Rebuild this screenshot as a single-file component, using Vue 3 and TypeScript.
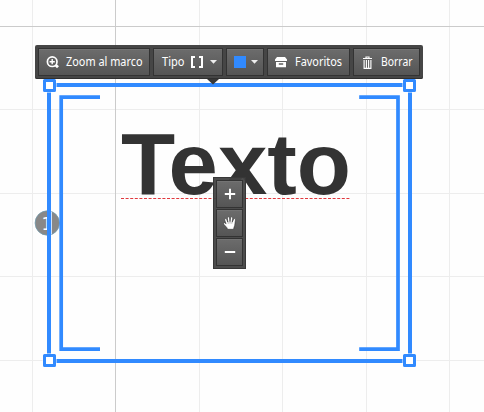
<script setup lang="ts">
interface Tool {
  id: string
  label?: string
  labelWidth?: number
}
const tools: Tool[] = [
  { id: 'zoom', label: 'Zoom al marco', labelWidth: 76.5 },
  { id: 'type', label: 'Tipo', labelWidth: 22.5 },
  { id: 'color' },
  { id: 'favorites', label: 'Favoritos', labelWidth: 47 },
  { id: 'delete', label: 'Borrar', labelWidth: 31.5 },
]
const columns = [32, 199, 282, 366, 449]
const rows = [109, 193, 276, 360]
const handles = [[43, 79], [403, 79], [43, 354], [403, 354]]
</script>

<template>
  <main class="canvas">
    <svg class="stage" width="484" height="412" viewBox="0 0 484 412">
      <g class="grid">
        <rect v-for="x in columns" :key="'c' + x" :x="x" y="0" width="1" height="412" />
        <rect v-for="y in rows" :key="'r' + y" x="0" :y="y" width="484" height="1" />
      </g>
      <g class="axis">
        <rect x="115" y="0" width="1" height="412" />
        <rect x="0" y="26" width="484" height="1" />
      </g>
      <text class="heading" x="121" y="194" textLength="230" lengthAdjust="spacingAndGlyphs">Texto</text>
      <path class="spelling" d="M121 198.5H351" />
      <circle class="badge" cx="47.3" cy="223" r="12.2" />
      <text class="badge-label" x="41.5" y="229.8">1</text>
      <path class="halo" d="M51.5 211.5V234.5" />
      <path class="frame" d="M49 85H410V361H49Z" />
      <path class="bracket" d="M100 97.2H61.2V349.2H100M359.2 97.2H398V349.2H359.2" />
      <g v-for="([x, y], i) in handles" :key="i">
        <rect class="gap" :x="x - .5" :y="y - .5" width="14" height="14" />
        <rect class="handle" :x="x + 1.5" :y="y + 1.5" width="10" height="10" />
      </g>
    </svg>

    <nav class="toolbar">
      <button v-for="tool in tools" :key="tool.id" :class="tool.id">
        <svg v-if="tool.id === 'zoom'" class="icon" width="14" height="14" viewBox="0 0 14 14">
          <circle cx="6.2" cy="6.7" r="4.8" fill="none" stroke="#fff" stroke-width="1.7" />
          <path d="M6.2 4.1V9.3M3.6 6.7H8.8" stroke="#fff" stroke-width="1.4" />
          <path d="M9.6 10L12 12.3" stroke="#fff" stroke-width="2.8" />
        </svg>
        <svg v-if="tool.id === 'favorites'" class="icon" width="12" height="12" viewBox="0 0 12 12">
          <path fill="#fff" fill-rule="evenodd" d="M2 1H10L12 3.4V5H0V3.4ZM1 6H11V11.2H1ZM3.8 7.2V8.8H8.2V7.2Z" />
        </svg>
        <svg v-if="tool.id === 'delete'" class="icon" width="9" height="13" viewBox="0 0 9 13">
          <path d="M0 2.5H9M3 2V1H6V2M1.1 4V12.3H7.9V4M3.4 4V12M5.6 4V12" fill="none" stroke="#fff" stroke-width="1.15" />
        </svg>
        <svg v-if="tool.label" class="label" :width="tool.labelWidth" height="18">
          <text x="0" y="13" :textLength="tool.labelWidth" lengthAdjust="spacingAndGlyphs">{{ tool.label }}</text>
        </svg>
        <svg v-if="tool.id === 'type'" class="brackets" width="12" height="12" viewBox="0 0 12 12">
          <path d="M4 1H1V11H4M8 1H11V11H8" fill="none" stroke="#fff" stroke-width="2" />
        </svg>
        <span v-if="tool.id === 'color'" class="swatch"></span>
        <svg v-if="tool.id === 'type' || tool.id === 'color'" class="caret" width="7" height="4">
          <path d="M0 0H7L3.5 3.7Z" fill="#eee" />
        </svg>
      </button>
      <svg class="pointer" width="12" height="6"><path d="M0 0H12L6 5.5Z" fill="#383838" /></svg>
    </nav>

    <div class="controls">
      <button>
        <svg width="12" height="12"><path d="M6 .8V11.2M.8 6H11.2" stroke="#fff" stroke-width="1.9" /></svg>
      </button>
      <button>
        <svg width="14" height="14" viewBox="0 0 14 14">
          <path fill="#fff" stroke="#333" stroke-width=".6" stroke-linejoin="round" d="M4.6 13.3L3.7 11.4L.8 8.3C0 7.2 1.1 6.2 2.2 7L3.1 7.9L1.7 4C1.3 2.6 3 2 3.6 3.3L4.8 6L4.4 2.1C4.3.5 6.3.3 6.5 1.8L7 5.5L7.6 1.7C7.9.3 9.8.6 9.7 2.1L9.3 5.9L10.6 3.3C11.2 2 12.9 2.6 12.5 4.1C11.7 6.8 12.3 9.3 11 11.3L10.6 13.3Z" />
          <path d="M4.8 5.2L5.3 7.6M7 4.8V7.5M9.3 5.2L8.8 7.6" stroke="#555" stroke-width=".5" />
        </svg>
      </button>
      <button>
        <svg width="12" height="12"><path d="M.8 6H11.2" stroke="#fff" stroke-width="2" /></svg>
      </button>
    </div>
  </main>
</template>

<style>
body { margin: 0; overflow: hidden; }
</style>

<style scoped>
.canvas { position: relative; width: 484px; height: 412px; background: #fefefe; }
.stage { display: block; }
.grid { fill: #ededed; }
.axis { fill: #cbcbcb; }
.heading { font: bold 88px "Liberation Sans", sans-serif; fill: #333; }
.spelling { stroke: #e0393e; stroke-width: 1.1; stroke-dasharray: 3 1.6; }
.badge { fill: #888; stroke: #719aad; stroke-width: .8; }
.badge-label { font: 17px "DejaVu Sans", sans-serif; fill: #fff; }
.halo { stroke: #cde2fc; stroke-width: 1; }
.frame { fill: none; stroke: #318aff; stroke-width: 4; }
.bracket { fill: none; stroke: #318aff; stroke-width: 3.7; }
.gap { fill: #fefefe; }
.handle { fill: #fff; stroke: #318aff; stroke-width: 3; stroke-linejoin: round; }
button {
  box-sizing: border-box;
  display: flex;
  align-items: center;
  margin: 0;
  padding: 0;
  border: 1px solid #333;
  background: linear-gradient(#6c6c6c, #555);
  box-shadow: inset 0 1px #747474;
}
.toolbar {
  position: absolute;
  left: 35px;
  top: 45px;
  box-sizing: border-box;
  display: flex;
  gap: 3px;
  width: 388px;
  height: 34px;
  padding: 3px;
  border-radius: 2px;
  background: rgba(60, 60, 60, .95);
  box-shadow: inset 0 -1px #303030;
}
.toolbar button { height: 28px; }
.zoom { width: 112px; padding-left: 7px; }
.type { width: 70px; padding-left: 8px; }
.color { width: 38px; padding-left: 7px; }
.favorites { width: 83px; padding-left: 7px; }
.delete { width: 67px; padding-left: 9px; }
.zoom .label { margin-left: 6px; }
.favorites .label { margin-left: 8px; }
.delete .label { margin-left: 9px; }
.label { overflow: visible; flex: none; }
.label text { font: 12px "Noto Sans", sans-serif; fill: #fff; }
.brackets { margin-left: 6.5px; flex: none; }
.swatch { width: 12px; height: 12px; background: #318aff; }
.caret { margin-left: 7px; flex: none; }
.color .caret { margin-left: 5px; }
.icon { flex: none; }
.pointer { position: absolute; left: 172px; top: 34px; }
.controls {
  position: absolute;
  left: 213px;
  top: 177px;
  box-sizing: border-box;
  display: flex;
  flex-direction: column;
  gap: 1px;
  width: 33px;
  height: 92px;
  padding: 2px;
  border: 1px solid #383838;
  background: rgba(66, 66, 66, .95);
}
.controls button { width: 27px; height: 28px; justify-content: center; }
</style>
